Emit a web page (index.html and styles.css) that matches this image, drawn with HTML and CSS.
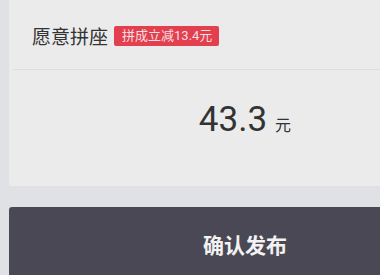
FILE: index.html
```html
<!DOCTYPE html>
<html lang="zh">
<head>
<meta charset="utf-8">
<link rel="stylesheet" href="styles.css">
</head>
<body>
<div class="page">
  <div class="card">
    <div class="row">
      <span class="label">愿意拼座</span>
      <span class="badge">拼成立减13.4元</span>
    </div>
    <div class="divider"></div>
    <div class="price">
      <span class="num">43.3</span>
      <span class="unit">元</span>
    </div>
  </div>
  <div class="btn">确认发布</div>
</div>
</body>
</html>
```
FILE: styles.css
```css
html, body {
  margin: 0;
  padding: 0;
  width: 380px;
  height: 275px;
  overflow: hidden;
  background: #e0e1e4;
  font-family: Roboto, "Noto Sans CJK SC", sans-serif;
}
.page {
  width: 490px;
  padding-left: 9px;
}
.card {
  width: 472px;
  height: 186px;
  background: #ebebeb;
  display: flex;
  flex-direction: column;
}
.row {
  height: 69px;
  display: flex;
  align-items: center;
  padding-left: 23px;
  gap: 6px;
  padding-top: 2px;
  box-sizing: border-box;
}
.label {
  font-size: 19px;
  color: #333;
  font-family: "Noto Sans CJK SC", sans-serif;
}
.badge {
  background: #e2404e;
  color: #f6dfe1;
  font-size: 13px;
  line-height: 20px;
  height: 20px;
  padding: 0 7px 0 8px;
  border-radius: 2px;
  margin-top: 1px;
  font-family: Roboto, "Noto Sans CJK SC", sans-serif;
}
.divider {
  height: 1px;
  margin-left: 4px;
  background: #dddddd;
}
.price {
  flex: 1;
  display: flex;
  justify-content: center;
  align-items: baseline;
  padding-top: 29px;
  gap: 8px;
  color: #333;
}
.num {
  font-size: 35px;
}
.unit {
  font-size: 16px;
  font-family: "Noto Sans CJK SC", sans-serif;
}
.btn {
  margin-top: 21px;
  width: 472px;
  height: 80px;
  background: #4a4854;
  color: #f2f2f2;
  font-size: 21px;
  font-weight: 700;
  font-family: "Noto Sans CJK SC", sans-serif;
  text-align: center;
  padding-top: 22px;
  box-sizing: border-box;
  border-radius: 3px 0 0 0;
}
```
